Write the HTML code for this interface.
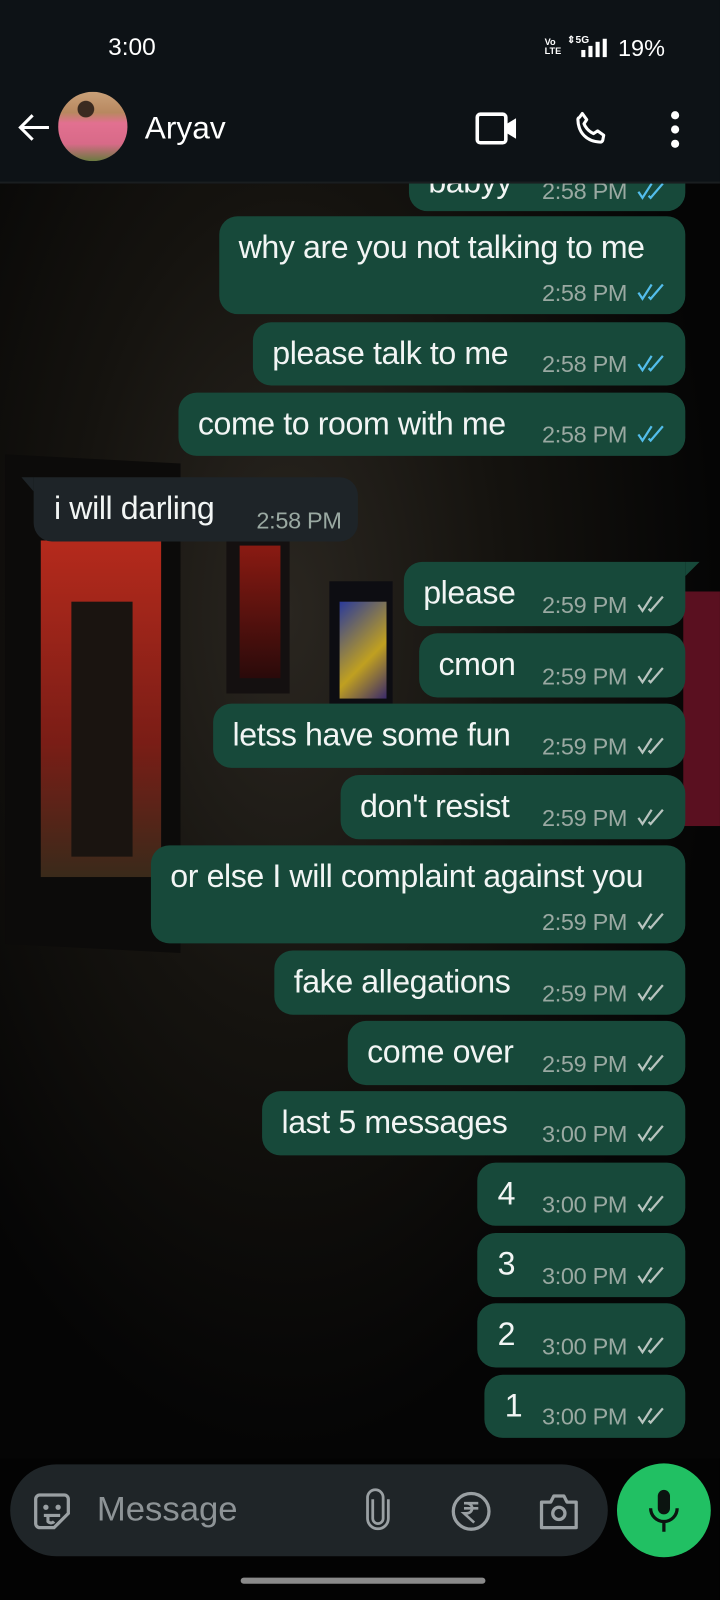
<!DOCTYPE html>
<html><head><meta charset="utf-8">
<style>
html,body{margin:0;padding:0;background:#000;width:720px;height:1600px;overflow:hidden}
#w{position:relative;width:706px;height:1569px;transform:scale(1.0198);transform-origin:0 0;font-family:"Liberation Sans",sans-serif;overflow:hidden;background:#030303}
.b{position:absolute;right:34px;background:#17493a;border-radius:18px}
.b.in{background:#1e2428;right:auto}
.t{position:absolute;left:19px;top:12px;font-size:31.5px;line-height:36px;color:#f2f5f4;white-space:nowrap;letter-spacing:-0.4px}
.m{position:absolute;right:57px;bottom:7px;font-size:23px;color:#9aa9a2;white-space:nowrap;letter-spacing:-0.3px}
.in .m{right:16px}
.c{position:absolute;right:16px;bottom:12px;width:34px;height:20px}
.bg{position:absolute}
</style></head><body><div id="w">
<div class="bg" style="left:0;top:180px;width:706px;height:1250px;background:radial-gradient(ellipse at 280px 420px,#2a2620 0%,#15130f 35%,#050505 70%)"></div>
<div class="bg" style="left:5px;top:450px;width:172px;height:480px;background:#0c0b0a;transform:skewY(3deg)"></div>
<div class="bg" style="left:40px;top:530px;width:118px;height:330px;background:linear-gradient(180deg,#b52a1c,#7a1d16 60%,#3a2a1a)"></div>
<div class="bg" style="left:70px;top:590px;width:60px;height:250px;background:#1a1410"></div>
<div class="bg" style="left:222px;top:520px;width:62px;height:160px;background:#141010"></div>
<div class="bg" style="left:235px;top:535px;width:40px;height:130px;background:linear-gradient(#8a1a12,#2a0a0a)"></div>
<div class="bg" style="left:323px;top:570px;width:62px;height:120px;background:#0d0d12"></div>
<div class="bg" style="left:333px;top:590px;width:46px;height:95px;background:linear-gradient(135deg,#2a3a9a,#c0a020 60%,#3a2a6a)"></div>
<div class="bg" style="left:670px;top:580px;width:36px;height:230px;background:#5a1020"></div>

<div class="b" style="left:401px;top:150px;height:57px"><div class="t" style="top:10px">babyy</div><div class="m" style="bottom:6px">2:58 PM</div><svg class="c" style="bottom:10px" viewBox="0 0 34 20"><path d="M4 11l4 6L17 3M14 15l2 2L28 3" stroke="#53bdeb" stroke-width="2.2" fill="none"/></svg></div>

<div style="position:absolute;left:0;top:0;width:706px;height:178px;background:#0d1216"></div>
<div style="position:absolute;left:0;top:178px;width:706px;height:2px;background:#1a1e20"></div>
<div style="position:absolute;left:106px;top:33px;font-size:24px;color:#fff">3:00</div>
<div style="position:absolute;left:534px;top:37px;font-size:9px;line-height:9px;color:#fff;font-weight:bold">Vo<br>LTE</div>
<div style="position:absolute;left:556px;top:34px;font-size:10px;color:#fff;font-weight:bold">⇕5G</div>
<div style="position:absolute;left:570px;top:38px;width:25px;height:18px">
<div style="position:absolute;left:0;bottom:0;width:4px;height:7px;background:#fff"></div>
<div style="position:absolute;left:7px;bottom:0;width:4px;height:11px;background:#fff"></div>
<div style="position:absolute;left:14px;bottom:0;width:4px;height:15px;background:#fff"></div>
<div style="position:absolute;left:21px;bottom:0;width:4px;height:18px;background:#fff"></div>
</div>
<div style="position:absolute;left:606px;top:34px;font-size:23px;color:#fff">19%</div>
<svg style="position:absolute;left:16px;top:110px" width="34" height="30" viewBox="0 0 34 30"><path d="M32 15H4M16 3L4 15l12 12" stroke="#fff" stroke-width="3" fill="none"/></svg>
<div style="position:absolute;left:57px;top:90px;width:68px;height:68px;border-radius:50%;background:radial-gradient(circle at 40% 25%,#3a2a20 0 12%,transparent 13%),linear-gradient(180deg,#c8a078 0%,#b88860 30%,#e27090 45%,#d86a88 75%,#6a7a40 100%)"></div>
<div style="position:absolute;left:142px;top:108px;font-size:31px;color:#fff">Aryav</div>
<svg style="position:absolute;left:466px;top:108px" width="42" height="36" viewBox="0 0 42 36"><rect x="2" y="4" width="28" height="28" rx="3" stroke="#fff" stroke-width="3.5" fill="none"/><path d="M30 14l10-6v20l-10-6z" fill="#fff"/></svg>
<svg style="position:absolute;left:560px;top:106px" width="40" height="40" viewBox="0 0 24 24"><path d="M6.6 3.2l2.6 3.6-1.6 2.4c1 2.4 3 4.6 5.6 5.8l2.4-1.6 3.6 2.6-.6 3c-.2.6-.8 1-1.4 1C9.4 19.8 4.2 14.6 4 6.8c0-.6.4-1.2 1-1.4z" stroke="#fff" stroke-width="1.8" fill="none" stroke-linejoin="round"/></svg>
<div style="position:absolute;left:658px;top:109px;width:8px;height:8px;border-radius:50%;background:#fff;box-shadow:0 14px 0 #fff,0 28px 0 #fff"></div>

<div class="b" style="left:215px;top:212px;height:96px"><div class="t">why are you not talking to me</div><div class="m">2:58 PM</div><svg class="c" viewBox="0 0 34 20"><path d="M4 11l4 6L17 3M14 15l2 2L28 3" stroke="#53bdeb" stroke-width="2.2" fill="none"/></svg></div>
<div class="b" style="left:248px;top:316px;height:62px"><div class="t">please talk to me</div><div class="m">2:58 PM</div><svg class="c" viewBox="0 0 34 20"><path d="M4 11l4 6L17 3M14 15l2 2L28 3" stroke="#53bdeb" stroke-width="2.2" fill="none"/></svg></div>
<div class="b" style="left:175px;top:385px;height:62px"><div class="t">come to room with me</div><div class="m">2:58 PM</div><svg class="c" viewBox="0 0 34 20"><path d="M4 11l4 6L17 3M14 15l2 2L28 3" stroke="#53bdeb" stroke-width="2.2" fill="none"/></svg></div>

<div class="b in" style="left:33px;top:468px;width:318px;height:63px;border-top-left-radius:0"><div class="t" style="left:20px">i will darling</div><div class="m">2:58 PM</div></div>
<div style="position:absolute;left:21px;top:468px;width:0;height:0;border-top:14px solid #1e2428;border-left:12px solid transparent"></div>

<div class="b" style="left:396px;top:551px;height:63px;border-top-right-radius:0"><div class="t">please</div><div class="m">2:59 PM</div><svg class="c" viewBox="0 0 34 20"><path d="M4 11l4 6L17 3M14 15l2 2L28 3" stroke="#b8c4bf" stroke-width="2.2" fill="none"/></svg></div>
<div style="position:absolute;left:672px;top:551px;width:0;height:0;border-top:14px solid #17493a;border-right:14px solid transparent"></div>

<div class="b" style="left:411px;top:621px;height:63px"><div class="t">cmon</div><div class="m">2:59 PM</div><svg class="c" viewBox="0 0 34 20"><path d="M4 11l4 6L17 3M14 15l2 2L28 3" stroke="#b8c4bf" stroke-width="2.2" fill="none"/></svg></div>
<div class="b" style="left:209px;top:690px;height:63px"><div class="t">letss have some fun</div><div class="m">2:59 PM</div><svg class="c" viewBox="0 0 34 20"><path d="M4 11l4 6L17 3M14 15l2 2L28 3" stroke="#b8c4bf" stroke-width="2.2" fill="none"/></svg></div>
<div class="b" style="left:334px;top:760px;height:63px"><div class="t">don't resist</div><div class="m">2:59 PM</div><svg class="c" viewBox="0 0 34 20"><path d="M4 11l4 6L17 3M14 15l2 2L28 3" stroke="#b8c4bf" stroke-width="2.2" fill="none"/></svg></div>
<div class="b" style="left:148px;top:829px;height:96px"><div class="t">or else I will complaint against you</div><div class="m">2:59 PM</div><svg class="c" viewBox="0 0 34 20"><path d="M4 11l4 6L17 3M14 15l2 2L28 3" stroke="#b8c4bf" stroke-width="2.2" fill="none"/></svg></div>
<div class="b" style="left:269px;top:932px;height:63px"><div class="t">fake allegations</div><div class="m">2:59 PM</div><svg class="c" viewBox="0 0 34 20"><path d="M4 11l4 6L17 3M14 15l2 2L28 3" stroke="#b8c4bf" stroke-width="2.2" fill="none"/></svg></div>
<div class="b" style="left:341px;top:1001px;height:63px"><div class="t">come over</div><div class="m">2:59 PM</div><svg class="c" viewBox="0 0 34 20"><path d="M4 11l4 6L17 3M14 15l2 2L28 3" stroke="#b8c4bf" stroke-width="2.2" fill="none"/></svg></div>
<div class="b" style="left:257px;top:1070px;height:63px"><div class="t">last 5 messages</div><div class="m">3:00 PM</div><svg class="c" viewBox="0 0 34 20"><path d="M4 11l4 6L17 3M14 15l2 2L28 3" stroke="#b8c4bf" stroke-width="2.2" fill="none"/></svg></div>
<div class="b" style="left:468px;top:1140px;height:62px"><div class="t" style="left:20px">4</div><div class="m">3:00 PM</div><svg class="c" viewBox="0 0 34 20"><path d="M4 11l4 6L17 3M14 15l2 2L28 3" stroke="#b8c4bf" stroke-width="2.2" fill="none"/></svg></div>
<div class="b" style="left:468px;top:1209px;height:63px"><div class="t" style="left:20px">3</div><div class="m">3:00 PM</div><svg class="c" viewBox="0 0 34 20"><path d="M4 11l4 6L17 3M14 15l2 2L28 3" stroke="#b8c4bf" stroke-width="2.2" fill="none"/></svg></div>
<div class="b" style="left:468px;top:1278px;height:63px"><div class="t" style="left:20px">2</div><div class="m">3:00 PM</div><svg class="c" viewBox="0 0 34 20"><path d="M4 11l4 6L17 3M14 15l2 2L28 3" stroke="#b8c4bf" stroke-width="2.2" fill="none"/></svg></div>
<div class="b" style="left:475px;top:1348px;height:62px"><div class="t" style="left:20px">1</div><div class="m">3:00 PM</div><svg class="c" viewBox="0 0 34 20"><path d="M4 11l4 6L17 3M14 15l2 2L28 3" stroke="#b8c4bf" stroke-width="2.2" fill="none"/></svg></div>

<div style="position:absolute;left:10px;top:1436px;width:586px;height:90px;border-radius:45px;background:#1f2528"></div>
<svg style="position:absolute;left:31px;top:1462px" width="40" height="40" viewBox="0 0 40 40"><path d="M8 4h24a4 4 0 0 1 4 4v14L22 36H8a4 4 0 0 1-4-4V8a4 4 0 0 1 4-4z" stroke="#9aa0a3" stroke-width="3.2" fill="none"/><circle cx="14" cy="16" r="2.6" fill="#9aa0a3"/><circle cx="26" cy="16" r="2.6" fill="#9aa0a3"/><path d="M12 24h16M16 24v6a4 4 0 0 0 6 0" stroke="#9aa0a3" stroke-width="3" fill="none"/></svg>
<div style="position:absolute;left:95px;top:1461px;font-size:34px;color:#8d9396">Message</div>
<svg style="position:absolute;left:355px;top:1458px" width="32" height="48" viewBox="0 0 32 48"><path d="M10 12v22a6 6 0 0 0 12 0V10a9 9 0 0 0-18 0v24a12 12 0 0 0 24 0V12" stroke="#9aa0a3" stroke-width="3.2" fill="none" transform="translate(2 2) scale(.85)"/></svg>
<svg style="position:absolute;left:441px;top:1461px" width="42" height="42" viewBox="0 0 42 42"><circle cx="21" cy="21" r="17.5" stroke="#9aa0a3" stroke-width="3.2" fill="none"/><path d="M14 13h14M14 18h14M16 13c8 0 8 10 0 10h-2l10 9" stroke="#9aa0a3" stroke-width="2.6" fill="none"/></svg>
<svg style="position:absolute;left:527px;top:1463px" width="42" height="38" viewBox="0 0 42 38"><path d="M4 10h9l3-6h10l3 6h9v25H4z" stroke="#9aa0a3" stroke-width="3.2" fill="none" stroke-linejoin="round"/><circle cx="21" cy="21" r="6" stroke="#9aa0a3" stroke-width="3.2" fill="none"/></svg>
<div style="position:absolute;left:605px;top:1435px;width:92px;height:92px;border-radius:50%;background:#21c063"></div>
<svg style="position:absolute;left:633px;top:1459px" width="36" height="46" viewBox="0 0 36 46"><rect x="12" y="2" width="12" height="24" rx="6" fill="#0b1410"/><path d="M5 20a13 13 0 0 0 26 0M18 33v10" stroke="#0b1410" stroke-width="3.2" fill="none"/></svg>
<div style="position:absolute;left:236px;top:1547px;width:240px;height:6px;border-radius:3px;background:#8a8a8a"></div>
</div></body></html>
